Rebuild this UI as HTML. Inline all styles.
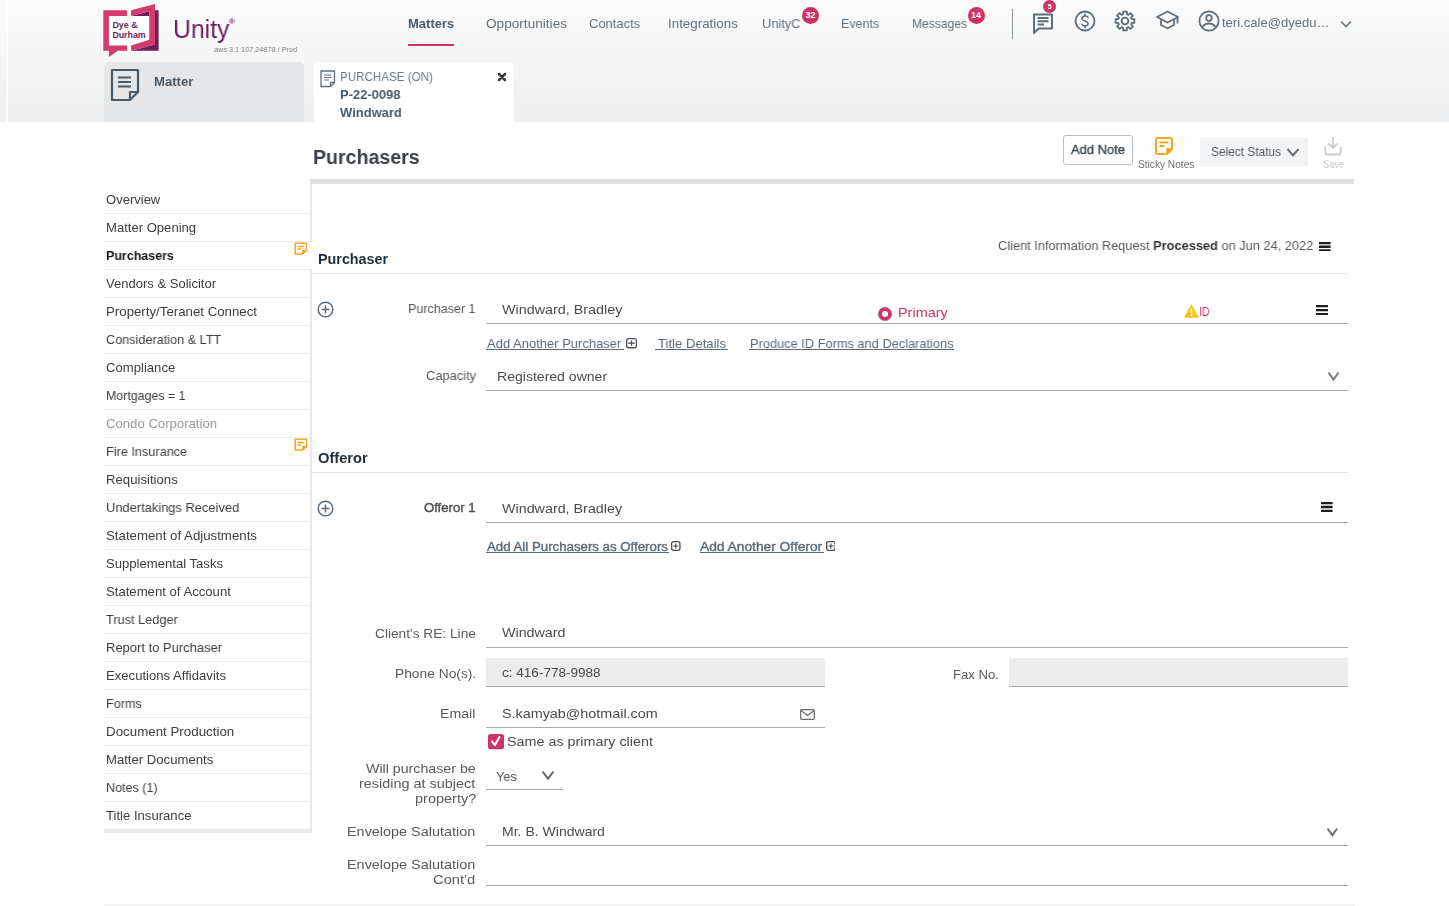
<!DOCTYPE html>
<html><head><meta charset="utf-8"><title>Purchasers</title>
<style>
html,body{margin:0;padding:0;}
body{width:1449px;height:906px;position:relative;overflow:hidden;background:#ffffff;font-family:"Liberation Sans",sans-serif;}
.t{position:absolute;white-space:nowrap;line-height:1;transform-origin:0 0;will-change:transform;}
.t b{font-weight:bold;color:#333;}
.r{position:absolute;}
.badge{position:absolute;border-radius:50%;background:#cf2f66;color:#fff;font-weight:bold;text-align:center;font-family:"Liberation Sans",sans-serif;}
</style></head><body>
<div class="r" style="left:0.00px;top:0.00px;width:1449.00px;height:122.00px;background:linear-gradient(#fbfbfb,#eeeff0);"></div>
<div class="r" style="left:6.00px;top:0.00px;width:1.50px;height:122.00px;background:#ffffff;"></div>
<svg class="r" style="left:100.00px;top:0.00px;" width="60" height="60" viewBox="0 0 60 60">
<rect x="8.9" y="11" width="40.4" height="34.4" fill="#fff"/>
<path d="M3.3 10.3 H27.1 V15.9 H8.9 V45.4 H27.1 V50.7 H17.9 L8.9 57 V50.7 H3.3 Z" fill="#d43a6c"/>
<path d="M55 10.3 H58.6 V50.7 H31.1 L55 44.4 Z" fill="#6e1d58"/>
<path d="M31.1 15.9 L49.3 11.3 V15.9 Z" fill="#6e1d58"/>
<path d="M31.1 10.3 L55 4 V44.4 L31.1 50.7 V45.4 L49.3 39.7 V11.3 L31.1 15.9 Z" fill="#d43a6c"/>
<text x="12.4" y="27.5" font-family="Liberation Sans" font-weight="bold" font-size="8.6" fill="#6e1d58" textLength="25.2" lengthAdjust="spacingAndGlyphs">Dye &amp;</text>
<text x="12.4" y="38.1" font-family="Liberation Sans" font-weight="bold" font-size="8.6" fill="#6e1d58" textLength="33.2" lengthAdjust="spacingAndGlyphs">Durham</text>
</svg>
<div class="t" style="left:172.80px;top:17.01px;font-size:25.5px;color:#6d1f5d;transform:scaleX(0.9725);">Unity</div>
<div class="t" style="left:229.30px;top:18.43px;font-size:8px;color:#6d1f5d;font-weight:bold;transform:scaleX(0.9492);">®</div>
<div class="t" style="left:214.00px;top:46.23px;font-size:8px;color:#7f7f7f;transform:scaleX(0.9101);">aws 3.1 107.24878 / Prod</div>
<div class="t" style="left:408.00px;top:16.60px;font-size:13px;color:#4b5a66;font-weight:bold;transform:scaleX(0.9957);">Matters</div>
<div class="r" style="left:408.00px;top:44.00px;width:46.00px;height:2.00px;background:#cf2f66;"></div>
<div class="t" style="left:486.00px;top:16.60px;font-size:13px;color:#62717b;transform:scaleX(1.0479);">Opportunities</div>
<div class="t" style="left:589.00px;top:16.60px;font-size:13px;color:#62717b;transform:scaleX(0.9942);">Contacts</div>
<div class="t" style="left:667.60px;top:16.60px;font-size:13px;color:#62717b;transform:scaleX(1.0280);">Integrations</div>
<div class="t" style="left:762.40px;top:16.60px;font-size:13px;color:#62717b;transform:scaleX(0.9897);">UnityC</div>
<div class="t" style="left:841.40px;top:16.60px;font-size:13px;color:#62717b;transform:scaleX(0.9572);">Events</div>
<div class="t" style="left:912.00px;top:16.60px;font-size:13px;color:#62717b;transform:scaleX(0.9291);">Messages</div>
<div class="badge" style="left:801.9px;top:7.4px;width:17px;height:17px;line-height:17px;font-size:9px;">32</div>
<div class="badge" style="left:967.5px;top:7.4px;width:17px;height:17px;line-height:17px;font-size:9px;">14</div>
<div class="r" style="left:1012.00px;top:9.00px;width:1.00px;height:29.60px;background:#8a949b;"></div>
<svg class="r" style="left:1031.00px;top:12.00px;" width="24" height="22" viewBox="0 0 24 22"><path d="M3 2.5 H21 V16.5 H7.5 L3 21 Z" fill="none" stroke="#5f6f79" stroke-width="2" stroke-linejoin="round"/><path d="M6.5 6 H17.5 M6.5 9.3 H17.5 M6.5 12.5 H13" stroke="#5f6f79" stroke-width="2.1"/></svg>
<div class="badge" style="left:1043.2px;top:0.4px;width:13px;height:13px;line-height:13px;font-size:7px;">5</div>
<svg class="r" style="left:1074.00px;top:10.00px;" width="22" height="22" viewBox="0 0 22 22"><circle cx="11" cy="11" r="9.5" fill="none" stroke="#5f6f79" stroke-width="1.8"/><path d="M14 7.5 C13.5 6.5 12.5 6 11 6 C9 6 8 7 8 8.5 C8 11.5 14 10.5 14 13.5 C14 15 13 16 11 16 C9.5 16 8.3 15.3 8 14.3 M11 4.3 V6 M11 16 V17.7" fill="none" stroke="#5f6f79" stroke-width="1.6" stroke-linecap="round"/></svg>
<svg class="r" style="left:1114.00px;top:10.00px;" width="22" height="22" viewBox="0 0 22 22"><path d="M20.43 9.19 L20.43 12.81 L17.75 12.87 L17.09 14.45 L18.95 16.38 L16.38 18.95 L14.45 17.09 L12.87 17.75 L12.81 20.43 L9.19 20.43 L9.13 17.75 L7.55 17.09 L5.62 18.95 L3.05 16.38 L4.91 14.45 L4.25 12.87 L1.57 12.81 L1.57 9.19 L4.25 9.13 L4.91 7.55 L3.05 5.62 L5.62 3.05 L7.55 4.91 L9.13 4.25 L9.19 1.57 L12.81 1.57 L12.87 4.25 L14.45 4.91 L16.38 3.05 L18.95 5.62 L17.09 7.55 L17.75 9.13 Z" fill="none" stroke="#5f6f79" stroke-width="1.8" stroke-linejoin="round"/><circle cx="11" cy="11" r="3.4" fill="none" stroke="#5f6f79" stroke-width="1.9"/></svg>
<svg class="r" style="left:1155.00px;top:10.00px;" width="25" height="20" viewBox="0 0 25 20"><path d="M12.5 1.5 L23 7 L12.5 12.5 L2 7 Z" fill="none" stroke="#5f6f79" stroke-width="1.8" stroke-linejoin="round"/><path d="M6 9.5 V15 L12.5 18.3 L19 15 V9.5" fill="none" stroke="#5f6f79" stroke-width="1.8" stroke-linejoin="round"/><path d="M22.5 7.5 V13.5" stroke="#5f6f79" stroke-width="1.8"/></svg>
<svg class="r" style="left:1198.00px;top:10.00px;" width="22" height="22" viewBox="0 0 22 22"><circle cx="11" cy="11" r="9.6" fill="none" stroke="#5f6f79" stroke-width="1.8"/><circle cx="11" cy="8" r="2.8" fill="none" stroke="#5f6f79" stroke-width="1.8"/><path d="M4.5 17 C6 14.5 8.5 13.5 11 13.5 C13.5 13.5 16 14.5 17.5 17" fill="none" stroke="#5f6f79" stroke-width="1.8"/></svg>
<div class="t" style="left:1222.00px;top:16.00px;font-size:13px;color:#62717b;transform:scaleX(1.0028);">teri.cale@dyedu…</div>
<svg class="r" style="left:1340.00px;top:20.00px;" width="12" height="8" viewBox="0 0 12 8"><path d="M1 1.5 L6 6.5 L11 1.5" fill="none" stroke="#5f6f79" stroke-width="1.6"/></svg>
<div class="r" style="left:104.00px;top:62.00px;width:200.00px;height:60.00px;background:#e5e6e8;border-radius:5px 5px 0 0;"></div>
<svg class="r" style="left:110.00px;top:68.00px;" width="30" height="34" viewBox="0 0 30 34"><path d="M2 2 H28 V24 L20 32 H2 Z" fill="none" stroke="#4a5a66" stroke-width="2.2" stroke-linejoin="round"/><path d="M28 24 H20 V32" fill="none" stroke="#4a5a66" stroke-width="2.2" stroke-linejoin="round"/><path d="M8 9.5 H21 M8 14 H21 M8 18.5 H21" stroke="#4a5a66" stroke-width="2.2"/></svg>
<div class="t" style="left:154.00px;top:75.10px;font-size:13px;color:#4b5a66;font-weight:bold;transform:scaleX(1.0103);">Matter</div>
<div class="r" style="left:314.00px;top:62.00px;width:200.00px;height:60.00px;background:#ffffff;border-radius:5px 5px 0 0;"></div>
<svg class="r" style="left:320.00px;top:70.00px;" width="16" height="18" viewBox="0 0 16 18"><path d="M1 1 H14.5 V12.5 L10.5 16.5 H1 Z" fill="none" stroke="#5f6f79" stroke-width="1.3" stroke-linejoin="round"/><path d="M14.5 12.5 H10.5 V16.5" fill="none" stroke="#5f6f79" stroke-width="1.3"/><path d="M4 5 H11.5 M4 7.5 H11.5 M4 10 H9" stroke="#5f6f79" stroke-width="1.2"/></svg>
<div class="t" style="left:339.60px;top:69.80px;font-size:13px;color:#6b7a83;transform:scaleX(0.8933);">PURCHASE (ON)</div>
<div class="t" style="left:339.60px;top:87.70px;font-size:13px;color:#4b5a66;font-weight:bold;transform:scaleX(0.9951);">P-22-0098</div>
<div class="t" style="left:339.60px;top:105.50px;font-size:13px;color:#4b5a66;font-weight:bold;transform:scaleX(0.9968);">Windward</div>
<svg class="r" style="left:497.00px;top:71.50px;" width="10" height="10" viewBox="0 0 10 10"><path d="M2 2 L8 8 M8 2 L2 8" stroke="#3a3a3a" stroke-width="2.6" stroke-linecap="round"/></svg>
<div class="t" style="left:312.70px;top:146.97px;font-size:20px;color:#3b4046;font-weight:bold;transform:scaleX(0.9789);">Purchasers</div>
<div class="r" style="left:1063.00px;top:135.00px;width:70.00px;height:30.00px;border:1px solid #b9bdc1;border-radius:3px;box-sizing:border-box;background:#fff;"></div>
<div class="t" style="left:1071.00px;top:143.37px;font-size:13.5px;color:#3e4a55;transform:scaleX(0.9591);-webkit-text-stroke:0.4px #3e4a55;">Add Note</div>
<svg class="r" style="left:1154.00px;top:136.00px;" width="20" height="20" viewBox="0 0 20 20"><path d="M4 2 H16 Q18 2 18 4 V13 L13 18 H4 Q2 18 2 16 V4 Q2 2 4 2 Z" fill="none" stroke="#f5a623" stroke-width="2" stroke-linejoin="round"/><path d="M18 13 H13 V18" fill="#f5a623" stroke="#f5a623" stroke-width="1.5"/><path d="M5.5 6.5 H14.5 M5.5 10 H10.5" stroke="#f5a623" stroke-width="2"/></svg>
<div class="t" style="left:1138.30px;top:160.34px;font-size:10px;color:#6f6f6f;transform:scaleX(1.0144);">Sticky Notes</div>
<div class="r" style="left:1200.00px;top:137.00px;width:108.00px;height:30.00px;background:#f1f3f5;"></div>
<div class="t" style="left:1211.00px;top:145.00px;font-size:13px;color:#555b60;transform:scaleX(0.9138);">Select Status</div>
<svg class="r" style="left:1286.00px;top:147.00px;" width="14" height="11" viewBox="0 0 14 11"><path d="M1.5 2 L7 8.5 L12.5 2" fill="none" stroke="#6e7276" stroke-width="2"/></svg>
<svg class="r" style="left:1322.00px;top:136.00px;" width="22" height="20" viewBox="0 0 22 20"><path d="M11 1 V12 M6.5 7.5 L11 12 L15.5 7.5" fill="none" stroke="#c9cdd1" stroke-width="1.8"/><path d="M3.3 11 V16.5 Q3.3 18.5 5.3 18.5 H16.7 Q18.7 18.5 18.7 16.5 V11" fill="none" stroke="#c9cdd1" stroke-width="1.8"/></svg>
<div class="t" style="left:1322.70px;top:160.34px;font-size:10px;color:#c5c9cd;transform:scaleX(0.9211);">Save</div>
<div class="r" style="left:310.00px;top:179.00px;width:1044.00px;height:4.50px;background:#dcdddf;"></div>
<div class="r" style="left:310.30px;top:183.50px;width:1.50px;height:646.00px;background:#e9e9ea;"></div>
<div class="t" style="left:105.80px;top:192.80px;font-size:13px;color:#3d3d3d;transform:scaleX(1.0018);">Overview</div>
<div class="r" style="left:104.00px;top:213.00px;width:206.00px;height:1.00px;background:#ebebeb;"></div>
<div class="t" style="left:105.80px;top:220.80px;font-size:13px;color:#3d3d3d;transform:scaleX(1.0056);">Matter Opening</div>
<div class="r" style="left:104.00px;top:241.00px;width:206.00px;height:1.00px;background:#ebebeb;"></div>
<div class="t" style="left:105.80px;top:248.80px;font-size:13px;color:#141414;font-weight:bold;transform:scaleX(0.9590);">Purchasers</div>
<div class="r" style="left:104.00px;top:269.00px;width:206.00px;height:1.00px;background:#ebebeb;"></div>
<div class="t" style="left:105.80px;top:276.80px;font-size:13px;color:#3d3d3d;transform:scaleX(1.0018);">Vendors &amp; Solicitor</div>
<div class="r" style="left:104.00px;top:297.00px;width:206.00px;height:1.00px;background:#ebebeb;"></div>
<div class="t" style="left:105.80px;top:304.80px;font-size:13px;color:#3d3d3d;transform:scaleX(1.0196);">Property/Teranet Connect</div>
<div class="r" style="left:104.00px;top:325.00px;width:206.00px;height:1.00px;background:#ebebeb;"></div>
<div class="t" style="left:105.80px;top:332.80px;font-size:13px;color:#3d3d3d;transform:scaleX(0.9746);">Consideration &amp; LTT</div>
<div class="r" style="left:104.00px;top:353.00px;width:206.00px;height:1.00px;background:#ebebeb;"></div>
<div class="t" style="left:105.80px;top:360.80px;font-size:13px;color:#3d3d3d;transform:scaleX(1.0087);">Compliance</div>
<div class="r" style="left:104.00px;top:381.00px;width:206.00px;height:1.00px;background:#ebebeb;"></div>
<div class="t" style="left:105.80px;top:388.80px;font-size:13px;color:#3d3d3d;transform:scaleX(0.9521);">Mortgages = 1</div>
<div class="r" style="left:104.00px;top:409.00px;width:206.00px;height:1.00px;background:#ebebeb;"></div>
<div class="t" style="left:105.80px;top:416.80px;font-size:13px;color:#9a9a9a;transform:scaleX(1.0109);">Condo Corporation</div>
<div class="r" style="left:104.00px;top:437.00px;width:206.00px;height:1.00px;background:#ebebeb;"></div>
<div class="t" style="left:105.80px;top:444.80px;font-size:13px;color:#3d3d3d;transform:scaleX(0.9771);">Fire Insurance</div>
<div class="r" style="left:104.00px;top:465.00px;width:206.00px;height:1.00px;background:#ebebeb;"></div>
<div class="t" style="left:105.80px;top:472.80px;font-size:13px;color:#3d3d3d;transform:scaleX(1.0127);">Requisitions</div>
<div class="r" style="left:104.00px;top:493.00px;width:206.00px;height:1.00px;background:#ebebeb;"></div>
<div class="t" style="left:105.80px;top:500.80px;font-size:13px;color:#3d3d3d;transform:scaleX(0.9911);">Undertakings Received</div>
<div class="r" style="left:104.00px;top:521.00px;width:206.00px;height:1.00px;background:#ebebeb;"></div>
<div class="t" style="left:105.80px;top:528.80px;font-size:13px;color:#3d3d3d;transform:scaleX(1.0189);">Statement of Adjustments</div>
<div class="r" style="left:104.00px;top:549.00px;width:206.00px;height:1.00px;background:#ebebeb;"></div>
<div class="t" style="left:105.80px;top:556.80px;font-size:13px;color:#3d3d3d;transform:scaleX(1.0078);">Supplemental Tasks</div>
<div class="r" style="left:104.00px;top:577.00px;width:206.00px;height:1.00px;background:#ebebeb;"></div>
<div class="t" style="left:105.80px;top:584.80px;font-size:13px;color:#3d3d3d;transform:scaleX(1.0105);">Statement of Account</div>
<div class="r" style="left:104.00px;top:605.00px;width:206.00px;height:1.00px;background:#ebebeb;"></div>
<div class="t" style="left:105.80px;top:612.80px;font-size:13px;color:#3d3d3d;transform:scaleX(0.9795);">Trust Ledger</div>
<div class="r" style="left:104.00px;top:633.00px;width:206.00px;height:1.00px;background:#ebebeb;"></div>
<div class="t" style="left:105.80px;top:640.80px;font-size:13px;color:#3d3d3d;transform:scaleX(0.9974);">Report to Purchaser</div>
<div class="r" style="left:104.00px;top:661.00px;width:206.00px;height:1.00px;background:#ebebeb;"></div>
<div class="t" style="left:105.80px;top:668.80px;font-size:13px;color:#3d3d3d;transform:scaleX(1.0084);">Executions Affidavits</div>
<div class="r" style="left:104.00px;top:689.00px;width:206.00px;height:1.00px;background:#ebebeb;"></div>
<div class="t" style="left:105.80px;top:696.80px;font-size:13px;color:#3d3d3d;transform:scaleX(0.9728);">Forms</div>
<div class="r" style="left:104.00px;top:717.00px;width:206.00px;height:1.00px;background:#ebebeb;"></div>
<div class="t" style="left:105.80px;top:724.80px;font-size:13px;color:#3d3d3d;transform:scaleX(1.0256);">Document Production</div>
<div class="r" style="left:104.00px;top:745.00px;width:206.00px;height:1.00px;background:#ebebeb;"></div>
<div class="t" style="left:105.80px;top:752.80px;font-size:13px;color:#3d3d3d;transform:scaleX(1.0094);">Matter Documents</div>
<div class="r" style="left:104.00px;top:773.00px;width:206.00px;height:1.00px;background:#ebebeb;"></div>
<div class="t" style="left:105.80px;top:780.80px;font-size:13px;color:#3d3d3d;transform:scaleX(0.9645);">Notes (1)</div>
<div class="r" style="left:104.00px;top:801.00px;width:206.00px;height:1.00px;background:#ebebeb;"></div>
<div class="t" style="left:105.80px;top:808.80px;font-size:13px;color:#3d3d3d;transform:scaleX(1.0083);">Title Insurance</div>
<div class="r" style="left:104.00px;top:829.40px;width:208.00px;height:3.30px;background:#e8e9ea;"></div>
<div class="r" style="left:310.00px;top:242.00px;width:2.00px;height:27.00px;background:#ffffff;"></div>
<svg class="r" style="left:294.00px;top:242.00px;" width="14" height="13" viewBox="0 0 14 13"><path d="M1.2 1.2 H12.5 V8.5 L8.5 12 H1.2 Z" fill="none" stroke="#f5a623" stroke-width="1.6" stroke-linejoin="round"/><path d="M12.5 8.5 H8.5 V12" fill="#f5a623" stroke="#f5a623" stroke-width="1"/><path d="M3.5 4.5 H10 M3.5 7 H7" stroke="#f5a623" stroke-width="1.4"/></svg>
<svg class="r" style="left:294.00px;top:438.00px;" width="14" height="13" viewBox="0 0 14 13"><path d="M1.2 1.2 H12.5 V8.5 L8.5 12 H1.2 Z" fill="none" stroke="#f5a623" stroke-width="1.6" stroke-linejoin="round"/><path d="M12.5 8.5 H8.5 V12" fill="#f5a623" stroke="#f5a623" stroke-width="1"/><path d="M3.5 4.5 H10 M3.5 7 H7" stroke="#f5a623" stroke-width="1.4"/></svg>
<div class="t" style="left:997.70px;top:239.40px;font-size:13px;color:#585858;transform:scaleX(0.9847);">Client Information Request <b>Processed</b> on Jun 24, 2022</div>
<svg class="r" style="left:1319.40px;top:241.50px;" width="11.599999999999909" height="9.5" viewBox="0 0 11.599999999999909 9.5"><path d="M0 1 H11.599999999999909 M0 4.75 H11.599999999999909 M0 8.5 H11.599999999999909" stroke="#1e1e1e" stroke-width="2.3" /></svg>
<div class="t" style="left:317.70px;top:251.95px;font-size:14px;color:#1f2e3b;font-weight:bold;transform:scaleX(1.0234);">Purchaser</div>
<div class="r" style="left:312.00px;top:273.00px;width:1035.50px;height:1.00px;background:#dfe3e6;"></div>
<svg class="r" style="left:317.20px;top:300.90px;" width="17" height="17" viewBox="0 0 17 17"><circle cx="8.5" cy="8.5" r="7.3" fill="none" stroke="#5d6b75" stroke-width="1.5"/><path d="M8.5 4.5 V12.5 M4.5 8.5 H12.5" stroke="#5d6b75" stroke-width="1.5"/></svg>
<div class="t" style="left:408.20px;top:301.80px;font-size:13px;color:#595959;transform:scaleX(0.9629);">Purchaser 1</div>
<div class="r" style="left:486.00px;top:323.00px;width:862.00px;height:1.20px;background:#a9a9a9;"></div>
<div class="t" style="left:501.80px;top:302.77px;font-size:13.5px;color:#4a4a4a;transform:scaleX(1.0627);">Windward, Bradley</div>
<svg class="r" style="left:876.50px;top:305.50px;" width="16" height="16" viewBox="0 0 16 16"><circle cx="8" cy="8" r="6.8" fill="#d0336a" stroke="#8a8a8a" stroke-width="0.6"/><circle cx="8" cy="8" r="3" fill="#fff"/></svg>
<div class="t" style="left:898.30px;top:305.57px;font-size:13.5px;color:#d0336a;transform:scaleX(1.0688);">Primary</div>
<svg class="r" style="left:1183.50px;top:303.50px;" width="15" height="14" viewBox="0 0 15 14"><path d="M7.5 0.8 L14.5 13.3 H0.5 Z" fill="#f5c518" stroke="#f5c518" stroke-width="0.8" stroke-linejoin="round"/><path d="M7.5 4.5 V9" stroke="#fff" stroke-width="1.6"/><circle cx="7.5" cy="11" r="0.9" fill="#fff"/></svg>
<div class="t" style="left:1199.00px;top:306.14px;font-size:12px;color:#d0336a;transform:scaleX(0.8833);">ID</div>
<svg class="r" style="left:1315.50px;top:304.80px;" width="12.200000000000045" height="10.099999999999966" viewBox="0 0 12.200000000000045 10.099999999999966"><path d="M0 1 H12.200000000000045 M0 5.049999999999983 H12.200000000000045 M0 9.099999999999966 H12.200000000000045" stroke="#1e1e1e" stroke-width="2.3" /></svg>
<div class="t" style="left:486.60px;top:336.70px;font-size:13px;color:#5b6c78;transform:scaleX(0.9985);">Add Another Purchaser</div>
<div class="r" style="left:486.00px;top:349.00px;width:137.50px;height:1.00px;background:#5b6c78;"></div>
<svg class="r" style="left:625.60px;top:338.30px;" width="11.100000000000023" height="10.399999999999977" viewBox="0 0 11.100000000000023 10.399999999999977"><rect x="0.65" y="0.65" width="9.80" height="9.10" rx="2" fill="none" stroke="#4a4f54" stroke-width="1.3"/><path d="M5.55 2.4 V8.00 M2.2 5.20 H8.90" stroke="#4a4f54" stroke-width="1.2"/></svg>
<div class="t" style="left:658.00px;top:336.70px;font-size:13px;color:#5b6c78;transform:scaleX(1.0089);">Title Details</div>
<div class="r" style="left:655.30px;top:349.00px;width:72.70px;height:1.00px;background:#5b6c78;"></div>
<div class="t" style="left:749.50px;top:336.70px;font-size:13px;color:#5b6c78;transform:scaleX(0.9850);">Produce ID Forms and Declarations</div>
<div class="r" style="left:749.00px;top:349.00px;width:204.50px;height:1.00px;background:#5b6c78;"></div>
<div class="t" style="left:425.80px;top:368.70px;font-size:13px;color:#595959;transform:scaleX(0.9901);">Capacity</div>
<div class="t" style="left:497.20px;top:369.87px;font-size:13.5px;color:#4a4a4a;transform:scaleX(1.0406);">Registered owner</div>
<div class="r" style="left:486.00px;top:390.00px;width:862.00px;height:1.20px;background:#a9a9a9;"></div>
<svg class="r" style="left:1327.00px;top:371.00px;" width="13" height="10" viewBox="0 0 13 10"><path d="M1.5 1.5 L6.50 8.50 L11.50 1.5" fill="none" stroke="#7a7a7a" stroke-width="2"/></svg>
<div class="t" style="left:317.70px;top:450.95px;font-size:14px;color:#1f2e3b;font-weight:bold;transform:scaleX(1.0485);">Offeror</div>
<div class="r" style="left:312.00px;top:472.00px;width:1035.50px;height:1.00px;background:#dfe3e6;"></div>
<svg class="r" style="left:317.20px;top:499.80px;" width="17" height="17" viewBox="0 0 17 17"><circle cx="8.5" cy="8.5" r="7.3" fill="none" stroke="#5d6b75" stroke-width="1.5"/><path d="M8.5 4.5 V12.5 M4.5 8.5 H12.5" stroke="#5d6b75" stroke-width="1.5"/></svg>
<div class="t" style="left:424.00px;top:500.80px;font-size:13px;color:#4f4f4f;transform:scaleX(1.0078);-webkit-text-stroke:0.4px #4f4f4f;">Offeror 1</div>
<div class="t" style="left:501.50px;top:501.57px;font-size:13.5px;color:#4a4a4a;transform:scaleX(1.0600);">Windward, Bradley</div>
<svg class="r" style="left:1321.40px;top:502.00px;" width="11.599999999999909" height="10" viewBox="0 0 11.599999999999909 10"><path d="M0 1 H11.599999999999909 M0 5.0 H11.599999999999909 M0 9 H11.599999999999909" stroke="#1e1e1e" stroke-width="2.3" /></svg>
<div class="r" style="left:486.00px;top:522.00px;width:862.00px;height:1.20px;background:#a9a9a9;"></div>
<div class="t" style="left:486.60px;top:539.80px;font-size:13px;color:#5b6c78;transform:scaleX(1.0192);-webkit-text-stroke:0.4px #5b6c78;">Add All Purchasers as Offerors</div>
<div class="r" style="left:486.00px;top:552.00px;width:183.00px;height:1.00px;background:#5b6c78;"></div>
<svg class="r" style="left:671.00px;top:541.00px;" width="9.600000000000023" height="10" viewBox="0 0 9.600000000000023 10"><rect x="0.65" y="0.65" width="8.30" height="8.70" rx="2" fill="none" stroke="#4a4f54" stroke-width="1.3"/><path d="M4.80 2.4 V7.60 M2.2 5.00 H7.40" stroke="#4a4f54" stroke-width="1.2"/></svg>
<div class="t" style="left:699.80px;top:539.80px;font-size:13px;color:#5b6c78;transform:scaleX(1.0589);-webkit-text-stroke:0.4px #5b6c78;">Add Another Offeror</div>
<div class="r" style="left:699.50px;top:552.00px;width:124.00px;height:1.00px;background:#5b6c78;"></div>
<svg class="r" style="left:825.60px;top:541.00px;" width="9.799999999999955" height="10" viewBox="0 0 9.799999999999955 10"><rect x="0.65" y="0.65" width="8.50" height="8.70" rx="2" fill="none" stroke="#4a4f54" stroke-width="1.3"/><path d="M4.90 2.4 V7.60 M2.2 5.00 H7.60" stroke="#4a4f54" stroke-width="1.2"/></svg>
<div class="t" style="left:374.80px;top:626.70px;font-size:13px;color:#595959;transform:scaleX(1.0543);">Client's RE: Line</div>
<div class="t" style="left:502.00px;top:626.27px;font-size:13.5px;color:#4a4a4a;transform:scaleX(1.0583);">Windward</div>
<div class="r" style="left:486.00px;top:647.00px;width:862.00px;height:1.20px;background:#a9a9a9;"></div>
<div class="t" style="left:394.50px;top:666.90px;font-size:13px;color:#595959;transform:scaleX(1.0601);">Phone No(s).</div>
<div class="r" style="left:486.00px;top:658.00px;width:339.00px;height:29.30px;background:#ececec;border-bottom:1.2px solid #a9a9a9;box-sizing:border-box;"></div>
<div class="t" style="left:501.90px;top:666.37px;font-size:13.5px;color:#4a4a4a;transform:scaleX(1.0031);">c: 416-778-9988</div>
<div class="t" style="left:953.00px;top:667.60px;font-size:13px;color:#595959;transform:scaleX(1.0066);">Fax No.</div>
<div class="r" style="left:1008.60px;top:658.00px;width:339.40px;height:29.30px;background:#ececec;border-bottom:1.2px solid #a9a9a9;box-sizing:border-box;"></div>
<div class="t" style="left:440.40px;top:706.60px;font-size:13px;color:#595959;transform:scaleX(1.0862);">Email</div>
<div class="t" style="left:501.90px;top:706.87px;font-size:13.5px;color:#4a4a4a;transform:scaleX(1.0628);">S.kamyab@hotmail.com</div>
<svg class="r" style="left:799.50px;top:708.50px;" width="15" height="11" viewBox="0 0 15 11"><rect x="0.7" y="0.7" width="13.6" height="9.6" rx="1" fill="none" stroke="#6a6a6a" stroke-width="1.2"/><path d="M1 1.5 L7.5 6.5 L14 1.5" fill="none" stroke="#6a6a6a" stroke-width="1.2"/></svg>
<div class="r" style="left:486.00px;top:727.00px;width:339.00px;height:1.20px;background:#a9a9a9;"></div>
<svg class="r" style="left:488.00px;top:734.30px;" width="16" height="15.3" viewBox="0 0 16 15.3"><rect x="0" y="0" width="16" height="15.3" rx="2.5" fill="#d0336a"/><path d="M4 7.5 L7 11 L11.5 3" fill="none" stroke="#fff" stroke-width="2" stroke-linecap="round" stroke-linejoin="round"/></svg>
<div class="t" style="left:506.80px;top:735.47px;font-size:13.5px;color:#4a4a4a;transform:scaleX(1.0626);">Same as primary client</div>
<div class="t" style="left:366.00px;top:761.80px;font-size:13px;color:#595959;transform:scaleX(1.0926);">Will purchaser be</div>
<div class="t" style="left:359.40px;top:776.60px;font-size:13px;color:#595959;transform:scaleX(1.1097);">residing at subject</div>
<div class="t" style="left:414.50px;top:792.00px;font-size:13px;color:#595959;transform:scaleX(1.1148);">property?</div>
<div class="t" style="left:496.00px;top:769.57px;font-size:13.5px;color:#4a4a4a;transform:scaleX(0.9455);">Yes</div>
<svg class="r" style="left:541.00px;top:770.00px;" width="14" height="10.200000000000045" viewBox="0 0 14 10.200000000000045"><path d="M1.5 1.5 L7.00 8.70 L12.50 1.5" fill="none" stroke="#666" stroke-width="2"/></svg>
<div class="r" style="left:486.00px;top:788.50px;width:76.70px;height:1.20px;background:#a9a9a9;"></div>
<div class="t" style="left:347.40px;top:825.00px;font-size:13px;color:#595959;transform:scaleX(1.1090);">Envelope Salutation</div>
<div class="t" style="left:501.60px;top:824.57px;font-size:13.5px;color:#4a4a4a;transform:scaleX(1.0394);">Mr. B. Windward</div>
<svg class="r" style="left:1326.00px;top:827.00px;" width="12.700000000000045" height="9.700000000000045" viewBox="0 0 12.700000000000045 9.700000000000045"><path d="M1.5 1.5 L6.35 8.20 L11.20 1.5" fill="none" stroke="#6d6d6d" stroke-width="2"/></svg>
<div class="r" style="left:486.00px;top:845.00px;width:862.00px;height:1.20px;background:#a9a9a9;"></div>
<div class="t" style="left:347.40px;top:858.20px;font-size:13px;color:#595959;transform:scaleX(1.1090);">Envelope Salutation</div>
<div class="t" style="left:433.40px;top:873.00px;font-size:13px;color:#595959;transform:scaleX(1.1344);">Cont'd</div>
<div class="r" style="left:486.00px;top:885.00px;width:862.00px;height:1.20px;background:#a9a9a9;"></div>
<div class="r" style="left:104.00px;top:904.00px;width:1251.00px;height:2.00px;background:#f3f3f3;"></div>
</body></html>
